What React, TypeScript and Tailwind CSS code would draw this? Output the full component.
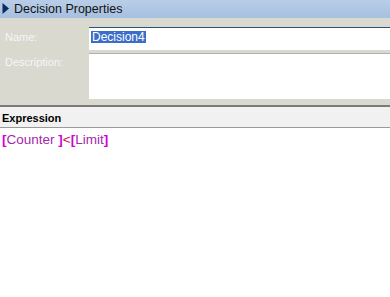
export default function App() {
  const font = { fontFamily: '"Liberation Sans", Arial, sans-serif' };
  return (
    <div className="w-[390px] h-[297px] bg-white overflow-hidden" style={font}>
      <div className="h-[18px] flex items-center bg-gradient-to-b from-[#b9cde6] to-[#a6c0e0]">
        <svg width="14" height="18" viewBox="0 0 14 18" className="shrink-0">
          <path d="M2.5 3 L9 8.5 L2.5 14 Z" fill="#0e2a5c" />
        </svg>
        <span className="text-[12.5px] text-[#111] leading-none">Decision Properties</span>
      </div>
      <div className="bg-[#d9d9d0] h-[89px] pt-[9px] border-b-2 border-[#7a7a7a] leading-none">
        <div className="flex h-[23px]">
          <span className="w-[89px] pl-[5px] pt-[5px] text-[11px] text-[#f6f6f6]">Name:</span>
          <div className="flex-1 bg-white border-t border-[#2c5470] pl-[2px] pt-[3px] flex items-start">
            <span className="bg-[#3a6ec9] text-white text-[12px] leading-[12px] h-[12px] block px-[1px]">Decision4</span>
          </div>
        </div>
        <div className="flex h-[46px] mt-[3px]">
          <span className="w-[89px] pl-[5px] pt-[4px] text-[11px] text-[#f6f6f6]">Description:</span>
          <div className="flex-1 bg-white border-t border-[#b0b0b0]" />
        </div>
      </div>
      <div className="bg-[#f1f1f1] h-[21px] flex items-end pl-[2px] pb-[3px] border-b border-[#9a9a9a]">
        <span className="text-[11px] font-bold text-black leading-none">Expression</span>
      </div>
      <div className="pl-[2px] pt-[4px] text-[13.5px] leading-[16px]">
        <span className="text-[#d400d4] font-bold">[</span>
        <span className="text-[#a02aa8]">Counter </span>
        <span className="text-[#d400d4] font-bold">]</span>
        <span className="text-[#c8104c]">&lt;</span>
        <span className="text-[#d400d4] font-bold">[</span>
        <span className="text-[#a02aa8]">Limit</span>
        <span className="text-[#d400d4] font-bold">]</span>
      </div>
    </div>
  );
}
